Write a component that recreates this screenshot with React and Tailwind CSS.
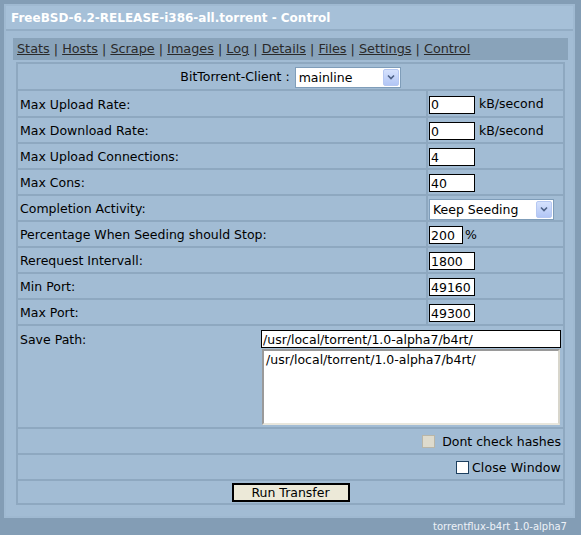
import React from 'react';

const navItems = ['Stats', 'Hosts', 'Scrape', 'Images', 'Log', 'Details', 'Files', 'Settings', 'Control'];

const settings = [
  { label: 'Max Upload Rate:', kind: 'input', value: '0', unit: 'kB/second' },
  { label: 'Max Download Rate:', kind: 'input', value: '0', unit: 'kB/second' },
  { label: 'Max Upload Connections:', kind: 'input', value: '4' },
  { label: 'Max Cons:', kind: 'input', value: '40' },
  { label: 'Completion Activity:', kind: 'select', value: 'Keep Seeding' },
  { label: 'Percentage When Seeding should Stop:', kind: 'percent', value: '200' },
  { label: 'Rerequest Intervall:', kind: 'input', value: '1800' },
  { label: 'Min Port:', kind: 'input', value: '49160' },
  { label: 'Max Port:', kind: 'input', value: '49300' },
];

// XP style combo box
const XpSelect = ({ value, className }) => (
  <div className={`relative h-[21px] border border-[#7f9db9] bg-white ${className}`}>
    <select
      defaultValue={value}
      className="h-full w-full appearance-none bg-transparent pl-[3px] text-[12.5px] leading-[19px] text-black outline-none"
    >
      <option>{value}</option>
    </select>
    <div className="pointer-events-none absolute right-[1px] top-[1px] flex h-[17px] w-[16px] items-center justify-center rounded-[2px] border border-[#b6c8f2] bg-gradient-to-b from-[#d6e2fd] to-[#b2c6f5]">
      <svg width="8" height="6" viewBox="0 0 8 6">
        <path d="M1 1.5 L4 4.5 L7 1.5" fill="none" stroke="#4d6185" strokeWidth="1.6" />
      </svg>
    </div>
  </div>
);

const TextBox = ({ value, className }) => (
  <input
    type="text"
    defaultValue={value}
    className={`h-[18px] border border-black bg-white px-[1px] text-[12.5px] leading-[16px] text-black outline-none ${className}`}
  />
);

const App = () => {
  return (
    <div className="flex h-[535px] w-[581px] flex-col bg-[#839db5] pl-[4px] pt-[4px] font-['DejaVu_Sans',Verdana,sans-serif] text-[12.5px] text-black">
      <div className="flex h-[514px] w-[571px] flex-col border-2 border-[#9fb9d1] bg-[#a2bcd4]">
        {/* Title */}
        <div className="flex h-[25px] items-center border-b-2 border-[#93adc5] bg-[#a6c0d8] pl-[5px] text-[12px] font-bold text-white">
          FreeBSD-6.2-RELEASE-i386-all.torrent - Control
        </div>

        {/* Tabs */}
        <div className="ml-[7px] mt-[7px] flex h-[22px] w-[555px] items-center bg-[#89a3ba] pl-[4px] text-[12.8px] text-[#2a2a2a]">
          {navItems.map((item, i) => (
            <span key={item} className="whitespace-pre">
              <a href="#" className="underline">{item}</a>
              {i < navItems.length - 1 ? ' | ' : ''}
            </span>
          ))}
        </div>

        {/* Settings table */}
        <div className="ml-[10px] mt-[2px] flex w-[549px] flex-col gap-[2px] bg-[#8ea8c0] p-[2px]">
          <div className="flex h-[25px] items-center justify-center gap-[5px] bg-[#a2bcd4] pt-[1px]">
            <span className="pt-[1px]">BitTorrent-Client :</span>
            <XpSelect value="mainline" className="w-[106px]" />
          </div>

          {settings.map((row, i) => (
            <div
              key={row.label}
              className={`grid grid-cols-[408px_135px] gap-x-[2px] ${i === 0 ? 'h-[25px]' : 'h-[24px]'}`}
            >
              <div className="flex items-center bg-[#a2bcd4] pl-[2px] pt-[3px]">{row.label}</div>
              <div className="flex items-center bg-[#a2bcd4] pl-[1px] pt-[2px]">
                {row.kind === 'input' && (
                  <>
                    <TextBox value={row.value} className="w-[46px]" />
                    {row.unit && <span className="ml-[4px]">{row.unit}</span>}
                  </>
                )}
                {row.kind === 'percent' && (
                  <>
                    <TextBox value={row.value} className="w-[34px]" />
                    <span className="ml-[2px]">%</span>
                  </>
                )}
                {row.kind === 'select' && <XpSelect value={row.value} className="w-[125px]" />}
              </div>
            </div>
          ))}

          <div className="flex h-[101px] justify-between bg-[#a2bcd4] pl-[2px] pr-[2px] pt-[4px]">
            <span className="pt-[1px]">Save Path:</span>
            <div className="flex flex-col">
              <TextBox value="/usr/local/torrent/1.0-alpha7/b4rt/" className="w-[300px]" />
              <textarea
                defaultValue="/usr/local/torrent/1.0-alpha7/b4rt/"
                className="ml-[1px] mt-[1px] h-[76px] w-[298px] resize-none border-2 border-[#9a9a9a] border-b-[#e8e6dc] border-r-[#d8d6cc] bg-white px-[2px] pt-[1px] text-[12.5px] leading-[15px] text-black outline-none"
              />
            </div>
          </div>

          <div className="flex h-[24px] items-center justify-end bg-[#a2bcd4] pr-[2px] pt-[1px]">
            <span className="mr-[7px] h-[13px] w-[13px] border border-[#b9b6a8] bg-[#dedbcd]" />
            <span className="pt-[1px]">Dont check hashes</span>
          </div>

          <div className="flex h-[24px] items-center justify-end bg-[#a2bcd4] pr-[2px] pt-[1px]">
            <span className="mr-[3px] h-[13px] w-[13px] border border-[#1c3f5f] bg-white" />
            <span className="pt-[1px] tracking-[0.15px]">Close Window</span>
          </div>

          <div className="flex h-[22px] items-center justify-center bg-[#a2bcd4]">
            <button className="h-[19px] w-[118px] border-2 border-black bg-[#ece9d8] text-[12.5px] leading-[15px] text-black">
              Run Transfer
            </button>
          </div>
        </div>
      </div>

      <div className="flex flex-1 items-center justify-end pr-[14px] text-[10px] text-[#eef2f8]">
        torrentflux-b4rt 1.0-alpha7
      </div>
    </div>
  );
};

export default App;
